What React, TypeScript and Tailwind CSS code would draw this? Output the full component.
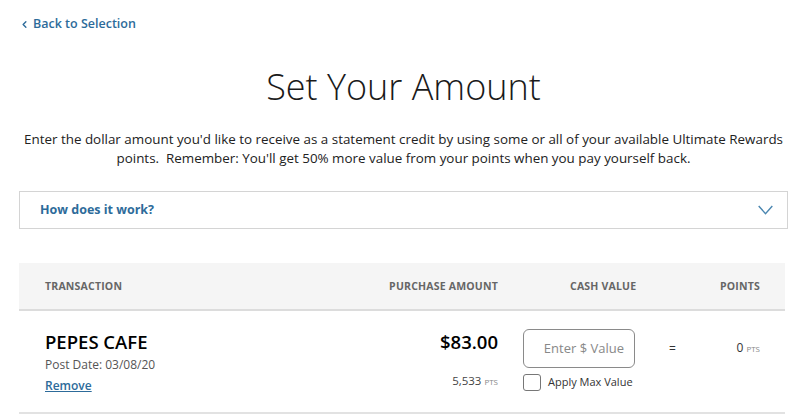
import { ChevronLeft } from "lucide-react";

const font = { fontFamily: '"Open Sans", "Liberation Sans", sans-serif' };

const cols = "grid grid-cols-[1fr_130px_157px_130px]";

export default function App() {
  return (
    <div className="w-[809px] h-[419px] bg-white overflow-hidden" style={font}>
      <div className="pl-[19px] pr-[21px] pt-[15px]">
        {/* Back link */}
        <a href="#" className="flex items-center gap-[3px] text-[12.5px] font-semibold text-[#2d6b9a] leading-[18px]">
          <ChevronLeft size={11} strokeWidth={3} />
          Back to Selection
        </a>

        <h1 className="mt-[34px] text-center text-[36px] font-light text-[#1a1a1a] leading-[40px]">
          Set Your Amount
        </h1>

        <p className="mt-[23px] text-center text-[13.4px] text-[#222] leading-[19px]">
          Enter the dollar amount you'd like to receive as a statement credit by using some or all of your available Ultimate Rewards
          <br />
          points.&nbsp; Remember: You'll get 50% more value from your points when you pay yourself back.
        </p>

        {/* Accordion */}
        <div className="mt-[23px] h-[38px] border border-[#d4d4d4] flex items-center justify-between pl-[20px] pr-[14px]">
          <span className="text-[12.5px] font-bold text-[#2d6b9a]">How does it work?</span>
          <svg width="15" height="10" viewBox="0 0 15 10" fill="none" stroke="#4a86b0" strokeWidth="1.4">
            <polyline points="0.7,1 7.5,8.6 14.3,1" />
          </svg>
        </div>

        {/* Table */}
        <div className="mt-[34px] w-[766px]">
          <div className={`${cols} h-[48px] pt-[2px] bg-[#f5f5f5] border-b-2 border-[#dcdcdc] items-center text-[10.5px] font-bold text-[#666] tracking-[0.2px]`}>
            <span className="pl-[26px]">TRANSACTION</span>
            <span className="text-right">PURCHASE AMOUNT</span>
            <span className="pl-[72px]">CASH VALUE</span>
            <span className="text-right pr-[25px]">POINTS</span>
          </div>

          <div className={`${cols} h-[103px] border-b-2 border-[#e2e2e2] pt-[18px]`}>
            <div className="pl-[26px] pt-[1px]">
              <div className="text-[18.5px] font-semibold text-black leading-[24px]">PEPES CAFE</div>
              <div className="text-[12px] text-[#555] leading-[18px] mt-[2px]">Post Date: 03/08/20</div>
              <a href="#" className="block mt-[3px] text-[12px] font-semibold text-[#2d6b9a] underline leading-[18px]">Remove</a>
            </div>

            <div className="text-right pt-[1px]">
              <div className="text-[18.5px] font-semibold text-black leading-[24px]">$83.00</div>
              <div className="mt-[19px] text-[11.5px] text-[#444] leading-[16px]">
                5,533 <span className="text-[8px] text-[#888]">PTS</span>
              </div>
            </div>

            <div className="pl-[25px]">
              <div className="w-[112px] h-[39px] border border-[#8a8a8a] rounded-[6px] flex items-center justify-end pr-[10px] text-[13px] text-[#888]">
                Enter $ Value
              </div>
              <label className="mt-[6px] flex items-center gap-[7px] text-[11px] text-[#333] whitespace-nowrap">
                <span className="w-[18px] h-[17px] border border-[#777] rounded-[3px] shrink-0" />
                Apply Max Value
              </label>
            </div>

            <div className="flex justify-between items-start pt-[11px] pl-[14px] pr-[25px]">
              <span className="text-[12px] text-[#333] leading-[16px] mt-[1px]">=</span>
              <span className="text-[12px] text-[#333] leading-[16px]">
                0 <span className="text-[8px] text-[#888]">PTS</span>
              </span>
            </div>
          </div>
        </div>
      </div>
    </div>
  );
}
